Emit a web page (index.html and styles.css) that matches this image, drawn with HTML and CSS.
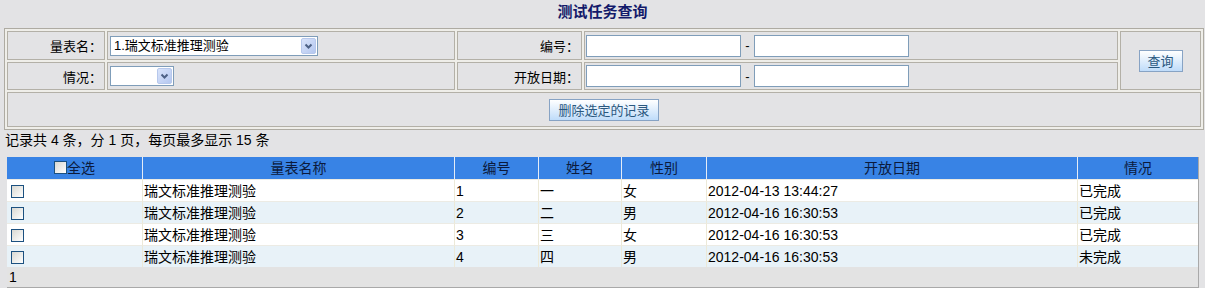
FILE: index.html
```html
<!DOCTYPE html>
<html lang="zh-CN">
<head>
  <meta charset="UTF-8">
  <title>测试任务查询</title>
  <link rel="stylesheet" href="styles.css">
</head>
<body>
  <h1 class="title">测试任务查询</h1>

  <table class="search">
    <colgroup>
      <col class="c1"><col class="c2"><col class="c3"><col class="c4"><col class="c5">
    </colgroup>
    <tr class="r1">
      <td class="label">量表名：</td>
      <td>
        <span class="sel">
          <select class="wide"><option>1.瑞文标准推理测验</option></select>
          <svg class="arrow" width="15" height="16" viewBox="0 0 15 16">
            <defs>
              <linearGradient id="ag" x1="0" y1="0" x2="1" y2="1">
                <stop offset="0" stop-color="#dbe5fb"/>
                <stop offset="1" stop-color="#b3c6ef"/>
              </linearGradient>
            </defs>
            <rect x="0.5" y="0.5" width="14" height="15" rx="1.5" fill="url(#ag)" stroke="#b7c8ec"/>
            <path d="M4.5 6.5 L7.5 9.5 L10.5 6.5" fill="none" stroke="#4d6185" stroke-width="2"/>
          </svg>
        </span>
      </td>
      <td class="label">编号：</td>
      <td class="inputs">
        <div class="range"><input class="txt" type="text"><span class="dash">-</span><input class="txt" type="text"></div>
      </td>
      <td rowspan="2" class="center"><button class="btn query">查询</button></td>
    </tr>
    <tr class="r2">
      <td class="label">情况：</td>
      <td>
        <span class="sel">
          <select class="short"><option></option></select>
          <svg class="arrow" width="15" height="16" viewBox="0 0 15 16">
            <rect x="0.5" y="0.5" width="14" height="15" rx="1.5" fill="url(#ag)" stroke="#b7c8ec"/>
            <path d="M4.5 6.5 L7.5 9.5 L10.5 6.5" fill="none" stroke="#4d6185" stroke-width="2"/>
          </svg>
        </span>
      </td>
      <td class="label">开放日期：</td>
      <td class="inputs">
        <div class="range"><input class="txt" type="text"><span class="dash">-</span><input class="txt" type="text"></div>
      </td>
    </tr>
    <tr class="r3">
      <td colspan="5" class="center"><button class="btn remove">删除选定的记录</button></td>
    </tr>
  </table>

  <div class="count">记录共 4 条，分 1 页，每页最多显示 15 条</div>

  <table class="grid">
    <tr class="head">
      <th class="g1"><input class="chk" type="checkbox">全选</th>
      <th class="g2">量表名称</th>
      <th class="g3">编号</th>
      <th class="g4">姓名</th>
      <th class="g5">性别</th>
      <th class="g6">开放日期</th>
      <th class="g7">情况</th>
    </tr>
    <tr>
      <td><input class="chk" type="checkbox"></td>
      <td>瑞文标准推理测验</td><td>1</td><td>一</td><td>女</td><td>2012-04-13 13:44:27</td><td>已完成</td>
    </tr>
    <tr class="alt">
      <td><input class="chk" type="checkbox"></td>
      <td>瑞文标准推理测验</td><td>2</td><td>二</td><td>男</td><td>2012-04-16 16:30:53</td><td>已完成</td>
    </tr>
    <tr>
      <td><input class="chk" type="checkbox"></td>
      <td>瑞文标准推理测验</td><td>3</td><td>三</td><td>女</td><td>2012-04-16 16:30:53</td><td>已完成</td>
    </tr>
    <tr class="alt">
      <td><input class="chk" type="checkbox"></td>
      <td>瑞文标准推理测验</td><td>4</td><td>四</td><td>男</td><td>2012-04-16 16:30:53</td><td>未完成</td>
    </tr>
    <tr class="foot">
      <td colspan="7">1</td>
    </tr>
  </table>
</body>
</html>
```

FILE: styles.css
```css
body{
  margin: 0;
  background-color: #e3e3e5;
  font-family: "Liberation Sans", "Noto Sans CJK SC", sans-serif;
  color: #000;
}
.title{
  margin: 0;
  height: 28px;
  line-height: 24px;
  font-size: 15px;
  font-weight: bold;
  text-align: center;
  color: #131a6a;
}

/* search form */
.search{
  margin-left: 4px;
  width: 1198px;
  table-layout: fixed;
  border: 1px solid #aeaba2;
  border-spacing: 2px;
  background-color: #efeee9;
  font-size: 13px;
}
.search td{
  border: 1px solid #b3b0a7;
  background-color: #e3e3e5;
  padding: 0 2px;
}
.c1{ width: 98px; }
.c2{ width: 348px; }
.c3{ width: 125px; }
.c4{ width: 534px; }
.c5{ width: 81px; }
.r1 td{ height: 27px; }
.r2 td{ height: 26px; }
.r3 td{ height: 33px; }
.label{
  text-align: right;
}
.center{
  text-align: center;
}
.search .inputs{
  padding-left: 1px;
}
.sel{
  position: relative;
  display: inline-block;
  vertical-align: middle;
}
.sel select{
  appearance: none;
  -webkit-appearance: none;
  height: 20px;
  margin: 0;
  padding: 0 0 0 3px;
  border: 1px solid #7f9db9;
  border-radius: 0;
  background-color: #fff;
  font-family: inherit;
  font-size: 13px;
  color: #000;
}
.sel .wide{ width: 208px; }
.sel .short{ width: 64px; }
.arrow{
  position: absolute;
  right: 2px;
  top: 2px;
  pointer-events: none;
}
.range{
  display: flex;
  align-items: center;
}
.txt{
  width: 155px;
  height: 22px;
  box-sizing: border-box;
  margin: 0;
  border: 1px solid #7f9db9;
  background-color: #fff;
}
.dash{
  width: 13px;
  text-align: center;
  font-size: 13px;
}
.btn{
  height: 22px;
  padding: 0;
  border: 1px solid #87a3c4;
  background: linear-gradient(#ffffff, #bfdcfa);
  font-family: inherit;
  font-size: 13px;
  color: #2a587f;
}
.query{ width: 44px; }
.remove{ width: 110px; }

.count{
  height: 20px;
  line-height: 20px;
  padding-left: 5px;
  margin-bottom: 7px;
  font-size: 14px;
}

/* result grid */
.grid{
  margin-left: 7px;
  width: 1192px;
  table-layout: fixed;
  border-spacing: 0;
  border-right: 1px solid #a9a9a9;
  border-bottom: 1px solid #a9a9a9;
  font-size: 14px;
  line-height: 20px;
}
.grid th,
.grid td{
  box-sizing: border-box;
}
.grid th{
  height: 22px;
  padding: 0;
  font-weight: normal;
  color: #0b1a3c;
  background-color: #3883e5;
  border-left: 1px solid #e4ecf7;
}
.grid th:first-child{ border-left: none; }
.g1{ width: 135px; }
.g2{ width: 312px; }
.g3{ width: 84px; }
.g4{ width: 83px; }
.g5{ width: 85px; }
.g6{ width: 371px; }
.g7{ width: 121px; }
.grid td{
  height: 22px;
  padding: 0 1px;
  background-color: #fff;
  border-left: 1px solid #ece9d8;
  border-top: 1px solid #ecebe4;
  white-space: nowrap;
}
.grid td:first-child{
  border-left: none;
  padding-left: 4px;
}
.grid .alt td{
  background-color: #e8f2f8;
}
.grid .foot td{
  height: 19px;
  padding-left: 2px;
  background-color: #e3e3e3;
  border-top: none;
}
.chk{
  appearance: none;
  -webkit-appearance: none;
  width: 13px;
  height: 13px;
  margin: 0;
  border: 1px solid #1c5180;
  background: linear-gradient(135deg, #d8d8d2, #ffffff);
  vertical-align: middle;
}
.head .chk{
  margin-top: -3px;
}
```
